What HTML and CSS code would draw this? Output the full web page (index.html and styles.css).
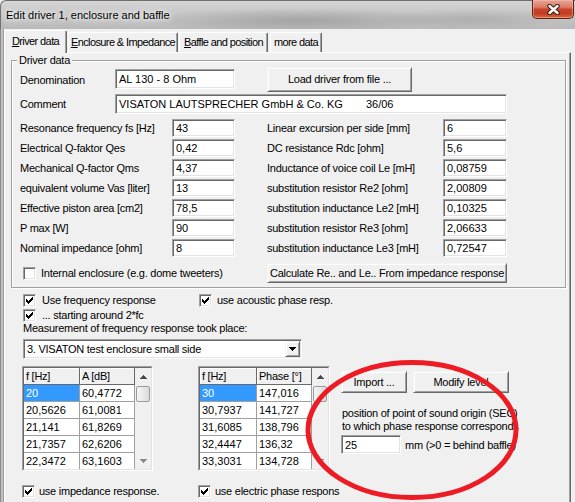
FILE: index.html
```html
<!DOCTYPE html>
<html>
<head>
<meta charset="utf-8">
<title>Edit driver 1, enclosure and baffle</title>
<link rel="stylesheet" href="styles.css">
</head>
<body>
<div class="window">
  <div class="titlebar">
    <span class="title">Edit driver 1, enclosure and baffle</span>
    <div class="close">
      <svg width="13" height="11" viewBox="0 0 13 11"><path d="M2.5 2 L10.5 9 M10.5 2 L2.5 9" stroke="#3b1a12" stroke-width="4.4" stroke-linecap="round"/><path d="M2.5 2 L10.5 9 M10.5 2 L2.5 9" stroke="#ffffff" stroke-width="2.4" stroke-linecap="round"/></svg>
    </div>
  </div>
  <div class="client">
    <div class="frame-left"></div>
    <div class="main">
      <div class="tabs">
        <div class="tab active t1"><u>D</u>river data</div>
        <div class="tab t2"><u>E</u>nclosure &amp; Impedance</div>
        <div class="tab t3"><u>B</u>affle and position</div>
        <div class="tab t4">more data</div>
      </div>
      <div class="panel">
        <div class="group">
          <span class="legend">Driver data</span>
          <div class="row row-denom">
            <span class="lbl w95 lh25">Denomination</span>
            <div class="edit w120 mt2">AL 130 - 8 Ohm</div>
            <div class="btn btn-load">Load driver from file ...</div>
          </div>
          <div class="row row-comment">
            <span class="lbl w95 lh20">Comment</span>
            <div class="edit w392">VISATON LAUTSPRECHER GmbH &amp; Co. KG<span class="gap-code">36/06</span></div>
          </div>
          <div class="params">
            <span class="lbl">Resonance frequency fs [Hz]</span><div class="edit small">43</div>
            <span class="lbl rl">Linear excursion per side [mm]</span><div class="edit small">6</div>
            <span class="lbl">Electrical Q-faktor Qes</span><div class="edit small">0,42</div>
            <span class="lbl rl">DC resistance Rdc [ohm]</span><div class="edit small">5,6</div>
            <span class="lbl">Mechanical Q-factor Qms</span><div class="edit small">4,37</div>
            <span class="lbl rl">Inductance of voice coil Le [mH]</span><div class="edit small">0,08759</div>
            <span class="lbl">equivalent volume Vas [liter]</span><div class="edit small">13</div>
            <span class="lbl rl">substitution resistor Re2 [ohm]</span><div class="edit small">2,00809</div>
            <span class="lbl">Effective piston area [cm2]</span><div class="edit small">78,5</div>
            <span class="lbl rl">substitution inductance Le2 [mH]</span><div class="edit small">0,10325</div>
            <span class="lbl">P max [W]</span><div class="edit small">90</div>
            <span class="lbl rl">substitution resistor Re3 [ohm]</span><div class="edit small">2,06633</div>
            <span class="lbl">Nominal impedance [ohm]</span><div class="edit small">8</div>
            <span class="lbl rl">substitution inductance Le3 [mH]</span><div class="edit small">0,72547</div>
          </div>
          <div class="row row-bottom">
            <div class="cbitem internal">
              <span class="cb"></span>
              <span class="cblabel">Internal enclosure (e.g. dome tweeters)</span>
            </div>
            <div class="btn btn-calc">Calculate Re.. and Le.. From impedance response</div>
          </div>
        </div>

        <div class="lower">
          <div class="cbrow first">
            <div class="cbitem w176 ml1">
              <span class="cb"><svg width="7" height="7" viewBox="0 0 7 7"><path d="M0 2h1v1h1v1h1v-1h1v-1h1v-1h1v-1h1v3h-1v1h-1v1h-1v1h-1v1h-1v-1h-1v-1h-1z" fill="#000"/></svg></span>
              <span class="cblabel g6">Use frequency response</span>
            </div>
            <div class="cbitem">
              <span class="cb"><svg width="7" height="7" viewBox="0 0 7 7"><path d="M0 2h1v1h1v1h1v-1h1v-1h1v-1h1v-1h1v3h-1v1h-1v1h-1v1h-1v1h-1v-1h-1v-1h-1z" fill="#000"/></svg></span>
              <span class="cblabel g5">use acoustic phase resp.</span>
            </div>
          </div>
          <div class="cbrow second">
            <div class="cbitem ml1">
              <span class="cb"><svg width="7" height="7" viewBox="0 0 7 7"><path d="M0 2h1v1h1v1h1v-1h1v-1h1v-1h1v-1h1v3h-1v1h-1v1h-1v1h-1v1h-1v-1h-1v-1h-1z" fill="#000"/></svg></span>
              <span class="cblabel g6">... starting around 2*fc</span>
            </div>
          </div>
          <div class="measure">Measurement of frequency response took place:</div>
          <div class="combo">
            <span class="combo-text">3. VISATON test enclosure small side</span>
            <span class="combo-btn"><svg width="7" height="4" viewBox="0 0 7 4"><path d="M0 0h7v1H6v1H5v1H4v1H3V3H2V2H1V1H0z" fill="#000"/></svg></span>
          </div>

          <div class="tables">
            <div class="grid g-left">
              <div class="grid-inner">
                <div class="cells">
                  <div class="hcell">f [Hz]</div><div class="hcell">A [dB]</div>
                  <div class="cell sel">20</div><div class="cell">60,4772</div>
                  <div class="cell">20,5626</div><div class="cell">61,0081</div>
                  <div class="cell">21,141</div><div class="cell">61,8269</div>
                  <div class="cell">21,7357</div><div class="cell">62,6206</div>
                  <div class="cell">22,3472</div><div class="cell">63,1603</div>
                </div>
                <div class="vscroll">
                  <div class="sb-arrow"><svg width="7" height="4" viewBox="0 0 7 4"><path d="M3 0h1v1h1v1h1v1h1v1H0V3h1V2h1V1h1z" fill="#4a4a4a"/></svg></div>
                  <div class="sb-thumb"></div>
                  <div class="sb-track"></div>
                  <div class="sb-arrow"><svg width="7" height="4" viewBox="0 0 7 4"><path d="M0 0h7v1H6v1H5v1H4v1H3V3H2V2H1V1H0z" fill="#8a8a8a"/></svg></div>
                </div>
              </div>
            </div>
            <div class="grid g-right">
              <div class="grid-inner">
                <div class="cells wide">
                  <div class="hcell">f [Hz]</div><div class="hcell">Phase [°]</div>
                  <div class="cell sel">30</div><div class="cell">147,016</div>
                  <div class="cell">30,7937</div><div class="cell">141,727</div>
                  <div class="cell">31,6085</div><div class="cell">138,796</div>
                  <div class="cell">32,4447</div><div class="cell">136,32</div>
                  <div class="cell">33,3031</div><div class="cell">134,728</div>
                </div>
                <div class="vscroll">
                  <div class="sb-arrow"><svg width="7" height="4" viewBox="0 0 7 4"><path d="M3 0h1v1h1v1h1v1h1v1H0V3h1V2h1V1h1z" fill="#4a4a4a"/></svg></div>
                  <div class="sb-thumb"></div>
                  <div class="sb-track"></div>
                  <div class="sb-arrow"><svg width="7" height="4" viewBox="0 0 7 4"><path d="M0 0h7v1H6v1H5v1H4v1H3V3H2V2H1V1H0z" fill="#8a8a8a"/></svg></div>
                </div>
              </div>
            </div>
            <div class="rcol">
              <div class="btnrow">
                <div class="btn btn-import">Import ...</div>
                <div class="btn btn-modify">Modify level</div>
              </div>
              <div class="ptext">position of point of sound origin (SEC)<br>to which phase response corresponds</div>
              <div class="prow">
                <div class="edit w60">25</div>
                <span class="mm">mm (&gt;0 = behind baffle)</span>
              </div>
            </div>
          </div>

          <div class="cbrow last">
            <div class="cbitem w176">
              <span class="cb"><svg width="7" height="7" viewBox="0 0 7 7"><path d="M0 2h1v1h1v1h1v-1h1v-1h1v-1h1v-1h1v3h-1v1h-1v1h-1v1h-1v1h-1v-1h-1v-1h-1z" fill="#000"/></svg></span>
              <span class="cblabel g4">use impedance response.</span>
            </div>
            <div class="cbitem">
              <span class="cb"><svg width="7" height="7" viewBox="0 0 7 7"><path d="M0 2h1v1h1v1h1v-1h1v-1h1v-1h1v-1h1v3h-1v1h-1v1h-1v1h-1v1h-1v-1h-1v-1h-1z" fill="#000"/></svg></span>
              <span class="cblabel g4">use electric phase respons</span>
            </div>
          </div>
        </div>
      </div>
    </div>
  </div>
  <svg class="annot" width="575" height="502" viewBox="0 0 575 502">
    <ellipse cx="412" cy="430" rx="104" ry="67.5" fill="none" stroke="#ed1c24" stroke-width="5"/>
  </svg>
</div>
</body>
</html>
```

FILE: styles.css
```css
html, body {
  margin: 0;
  padding: 0;
}
body {
  font-family: "Liberation Sans", Arial, sans-serif;
  font-size: 11px;
  letter-spacing: -0.25px;
  color: #000;
  background: #f0f0f0;
}
.window {
  position: relative;
  width: 575px;
  height: 502px;
  overflow: hidden;
  background: #f0f0f0;
}

/* title bar */
.titlebar {
  height: 29px;
  box-sizing: border-box;
  display: flex;
  justify-content: space-between;
  align-items: flex-start;
  border-top-left-radius: 6px;
  border-top: 1px solid #6e6e6e;
  border-left: 1px solid #6e6e6e;
  background:
    radial-gradient(ellipse 150px 12px at 300px 19px, rgba(110,110,110,0.35), rgba(110,110,110,0) 100%),
    radial-gradient(ellipse 90px 10px at 470px 18px, rgba(120,120,120,0.25), rgba(120,120,120,0) 100%),
    linear-gradient(180deg, #d6d6d6 0%, #c6c6c6 45%, #bababa 100%);
}
.title {
  padding: 8px 0 0 5px;
  line-height: 13px;
  font-size: 11px;
  letter-spacing: 0;
  color: #000;
  text-shadow: 0 0 4px #fff, 0 0 8px rgba(255,255,255,0.9), 0 0 12px rgba(255,255,255,0.7);
}
.close {
  width: 42px;
  height: 19px;
  margin: -1px 1px 0 0;
  box-sizing: border-box;
  border: 1px solid #5b2418;
  border-top: none;
  border-radius: 0 0 5px 5px;
  background: linear-gradient(180deg, #e6a697 0%, #dc7b66 40%, #c7432a 52%, #c23d22 75%, #d96a3e 100%);
  box-shadow: inset 0 0 0 1px rgba(255,200,180,0.45);
  display: flex;
  align-items: center;
  justify-content: center;
}

/* client */
.client {
  display: flex;
  height: 473px;
}
.frame-left {
  width: 4px;
  flex: none;
  background: linear-gradient(90deg, #8a8a8a 0 1px, #c2c2c2 1px 3px, #9c9c9c 3px 4px);
}
.main {
  width: 571px;
  display: flex;
  flex-direction: column;
}

/* tabs */
.tabs {
  height: 23px;
  display: flex;
  align-items: flex-end;
}
.tab {
  box-sizing: border-box;
  height: 20px;
  border: 1px solid;
  border-color: #fff #696969 transparent #fff;
  border-bottom: none;
  border-radius: 2px 2px 0 0;
  box-shadow: inset -1px 0 #a0a0a0;
  text-align: center;
  line-height: 18px;
  letter-spacing: -0.6px;
  white-space: nowrap;
}
.tab.active {
  height: 23px;
  margin-bottom: -1px;
  line-height: 20px;
  background: #f0f0f0;
  position: relative;
}
.t1 { width: 63px; }
.t2 { width: 110px; margin-left: 1px; }
.t3 { width: 89px; margin-left: 1px; }
.t4 { width: 52px; margin-left: 2px; }

.panel {
  flex: 1;
  width: 567px;
  box-sizing: border-box;
  border-top: 1px solid #fff;
  border-left: 1px solid #fff;
  border-right: 1px solid #696969;
  box-shadow: inset -1px 0 #a0a0a0;
  display: flex;
  flex-direction: column;
}

/* group box */
.group {
  margin: 7px 0 0 6px;
  width: 555px;
  box-sizing: border-box;
  border: 1px solid #a0a0a0;
  box-shadow: inset 1px 1px #fff, 1px 1px #fff;
  padding: 0 8px 4px 8px;
  display: flex;
  flex-direction: column;
}
.legend {
  align-self: flex-start;
  margin: -7px 0 0 -3px;
  padding: 0 2px;
  line-height: 13px;
  height: 13px;
  background: #f0f0f0;
}
.row {
  display: flex;
  align-items: flex-start;
}
.row-denom { height: 25px; }
.row-comment { margin-top: 2px; height: 20px; }
.lbl { white-space: nowrap; }
.w95 { width: 95px; flex: none; }
.lh25 { line-height: 26px; }
.lh20 { line-height: 21px; }
.mt2 { margin-top: 2px; }

.edit {
  box-sizing: border-box;
  height: 20px;
  background: #fff;
  border: 1px solid;
  border-color: #a0a0a0 #fff #fff #a0a0a0;
  box-shadow: inset 1px 1px #696969, inset -1px -1px #e3e3e3;
  padding: 0 3px;
  line-height: 19px;
  letter-spacing: 0;
  white-space: nowrap;
  overflow: hidden;
  flex: none;
}
.w120 { width: 120px; }
.w392 { width: 392px; }
.w60 { width: 60px; height: 19px; line-height: 18px; }
.gap-code { margin-left: 23px; }

.btn {
  box-sizing: border-box;
  background: #f0f0f0;
  border: 1px solid;
  border-color: #f4f4f4 #696969 #696969 #f4f4f4;
  box-shadow: inset 1px 1px #fff, inset -1px -1px #a0a0a0;
  text-align: center;
  white-space: nowrap;
  overflow: hidden;
  flex: none;
}
.btn-load {
  margin-left: 32px;
  width: 145px;
  height: 25px;
  line-height: 23px;
}

.params {
  margin-top: 5px;
  display: grid;
  grid-template-columns: 152px 63px 208px 64px;
  grid-auto-rows: 18px;
  row-gap: 2px;
  align-items: center;
}
.params .lbl { line-height: 18px; }
.params .rl { padding-left: 32px; }
.edit.small { height: 18px; line-height: 17px; }

.row-bottom {
  margin-top: 6px;
  height: 20px;
  align-items: center;
}
.cbitem {
  display: flex;
  align-items: center;
  white-space: nowrap;
}
.internal { width: 247px; flex: none; }
.internal .cb { margin-left: 3px; }
.internal .cblabel { margin-left: 5px; }
.btn-calc {
  width: 240px;
  height: 20px;
  line-height: 18px;
}

.cb {
  width: 13px;
  height: 13px;
  box-sizing: border-box;
  flex: none;
  border: 1px solid;
  border-color: #a0a0a0 #fff #fff #a0a0a0;
  box-shadow: inset 1px 1px #696969, inset -1px -1px #e3e3e3;
  background: #fff;
  padding: 2px;
  display: flex;
}
.cb svg { display: block; }
.g4 { margin-left: 4px; }
.g5 { margin-left: 5px; }
.g6 { margin-left: 6px; }
.w176 { width: 176px; flex: none; }
.ml1 { margin-left: 1px; }

/* lower area */
.lower {
  padding-left: 17px;
  display: flex;
  flex-direction: column;
}
.cbrow {
  display: flex;
  align-items: center;
  height: 13px;
}
.cbrow.first { margin-top: 6px; }
.cbrow.second { margin-top: 2px; }
.cbrow.last { margin-top: 14px; }
.cbrow .cblabel { line-height: 13px; }

.measure {
  margin-left: 1px;
  line-height: 13px;
  white-space: nowrap;
}
.combo {
  margin: 4px 0 0 1px;
  width: 279px;
  height: 20px;
  box-sizing: border-box;
  background: #fff;
  border: 1px solid;
  border-color: #a0a0a0 #fff #fff #a0a0a0;
  box-shadow: inset 1px 1px #696969, inset -1px -1px #e3e3e3;
  padding: 1px;
  display: flex;
  align-items: stretch;
}
.combo-text {
  flex: 1;
  padding-left: 2px;
  line-height: 16px;
  white-space: nowrap;
}
.combo-btn {
  width: 15px;
  box-sizing: border-box;
  background: #f0f0f0;
  border: 1px solid;
  border-color: #f4f4f4 #696969 #696969 #f4f4f4;
  box-shadow: inset 1px 1px #fff, inset -1px -1px #a0a0a0;
  display: flex;
  align-items: center;
  justify-content: center;
}
.combo-btn svg { display: block; }

/* grids */
.tables {
  margin-top: 7px;
  display: flex;
  align-items: flex-start;
}
.grid {
  height: 105px;
  box-sizing: border-box;
  border: 1px solid;
  border-color: #a0a0a0 #fff #fff #a0a0a0;
  flex: none;
}
.g-left { width: 131px; }
.g-right { width: 132px; margin-left: 45px; }
.grid-inner {
  height: 100%;
  box-sizing: border-box;
  border: 1px solid;
  border-color: #696969 #e3e3e3 #e3e3e3 #696969;
  display: flex;
}
.cells {
  display: grid;
  grid-template-columns: 56px 55px;
  grid-auto-rows: 17px;
  align-content: start;
  overflow: hidden;
  height: 100%;
  background: #fff;
}
.cells.wide { grid-template-columns: 57px 55px; }
.hcell, .cell {
  box-sizing: border-box;
  padding-left: 2px;
  line-height: 16px;
  white-space: nowrap;
  overflow: hidden;
}
.hcell {
  background: #f0f0f0;
  border-right: 1px solid #696969;
  border-bottom: 1px solid #696969;
  box-shadow: inset 1px 1px #fff;
}
.cell {
  background: #fff;
  border-right: 1px solid #a0a0a0;
  border-bottom: 1px solid #a0a0a0;
  letter-spacing: 0;
}
.cell.sel {
  background: #3399ff;
  color: #fff;
}
.vscroll {
  width: 16px;
  flex: none;
  background: #f0f0f0;
  display: flex;
  flex-direction: column;
}
.sb-arrow {
  height: 17px;
  flex: none;
  display: flex;
  align-items: center;
  justify-content: center;
}
.sb-arrow svg { display: block; }
.sb-thumb {
  height: 16px;
  margin: 1px 1px 0 1px;
  box-sizing: border-box;
  border: 1px solid #9a9a9a;
  border-radius: 2px;
  background: linear-gradient(90deg, #f6f6f6, #e6e6e6 60%, #dadada);
  flex: none;
}
.sb-track { flex: 1; }

/* right column */
.rcol {
  margin-left: 11px;
  padding-top: 5px;
  display: flex;
  flex-direction: column;
}
.btnrow {
  display: flex;
  gap: 6px;
}
.btn-import { width: 66px; height: 22px; line-height: 20px; }
.btn-modify { width: 96px; height: 22px; line-height: 20px; }
.ptext {
  margin: 14px 0 0 1px;
  line-height: 13px;
  white-space: nowrap;
}
.prow {
  margin-top: 2px;
  display: flex;
  align-items: center;
}
.mm {
  margin-left: 4px;
  white-space: nowrap;
}

/* annotation overlay */
.annot {
  position: absolute;
  left: 0;
  top: 0;
  pointer-events: none;
}
```
